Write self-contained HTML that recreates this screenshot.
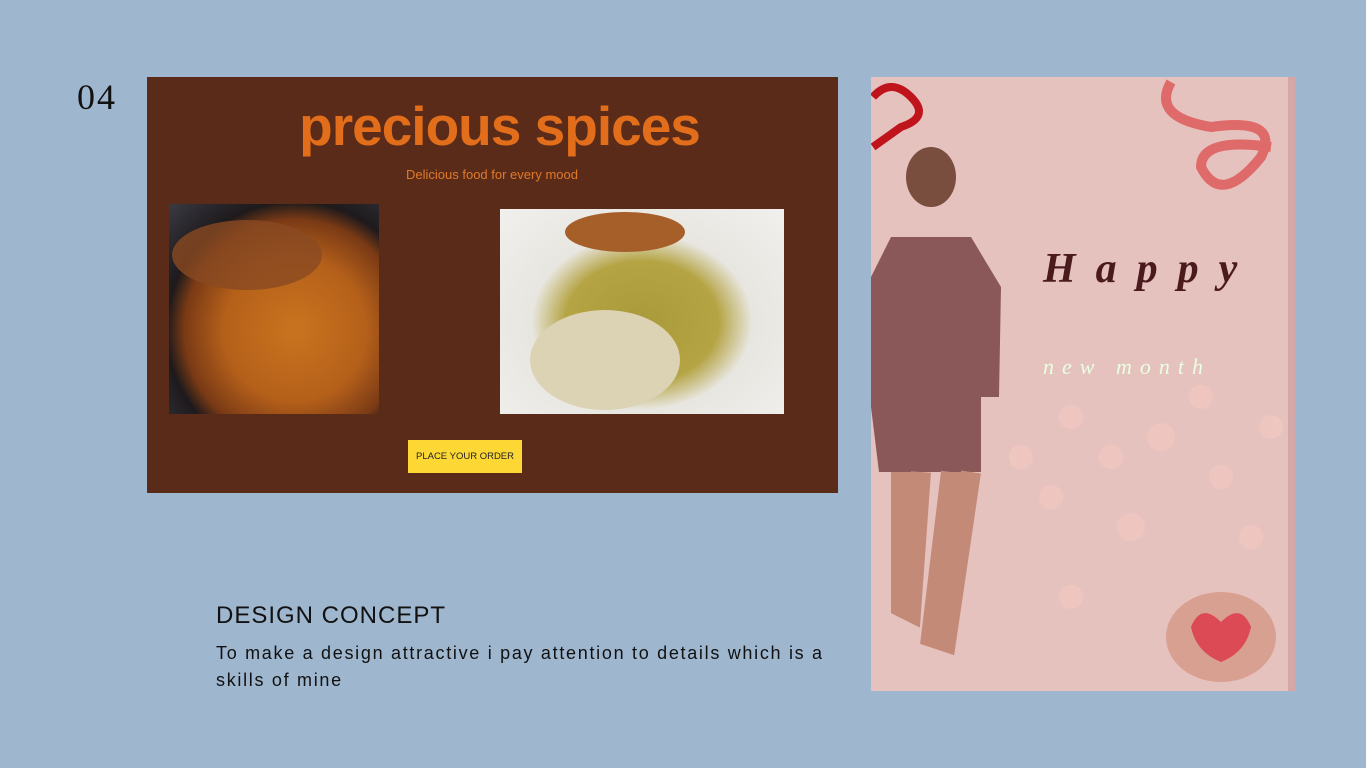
<!DOCTYPE html>
<html><head><meta charset="utf-8"><style>
*{margin:0;padding:0;box-sizing:border-box}
body{width:1366px;height:768px;background:#9fb6cf;position:relative;overflow:hidden;font-family:"Liberation Sans",sans-serif}
.a{position:absolute}
</style></head><body>
<div class="a" style="left:77px;top:76px;font-family:'Liberation Serif',serif;font-size:36px;color:#111;letter-spacing:2px">04</div>
<div class="a" style="left:147px;top:77px;width:691px;height:416px;background:#5a2b19"></div>
<div class="a" style="left:147px;top:94px;width:705px;text-align:center;font-weight:bold;font-size:55px;color:#e26e1b;letter-spacing:-1px">precious spices</div>
<div class="a" style="left:147px;top:167px;width:690px;text-align:center;font-size:13px;color:#e07a2a">Delicious food for every mood</div>
<div class="a" style="left:169px;top:204px;width:210px;height:210px;background:radial-gradient(ellipse at 60% 60%,#c8741e 0%,#b5601a 40%,#7a3a15 62%,#1e1a1c 72%,#3a3a44 100%)"></div>
<div class="a" style="left:172px;top:220px;width:150px;height:70px;border-radius:50%;background:#8a4a22;opacity:.8"></div>
<div class="a" style="left:500px;top:209px;width:284px;height:205px;background:radial-gradient(ellipse at 50% 55%,#a99a3a 0%,#b5a444 38%,#e8e6e0 55%,#f1f0ee 100%)"></div>
<div class="a" style="left:565px;top:212px;width:120px;height:40px;border-radius:50%;background:#a75f2a"></div>
<div class="a" style="left:530px;top:310px;width:150px;height:100px;border-radius:50%;background:#dcd2b4"></div>
<div class="a" style="left:408px;top:440px;width:114px;height:33px;background:#fdd835;color:#222;font-size:9.5px;line-height:33px;text-align:center">PLACE YOUR ORDER</div>
<div class="a" style="left:216px;top:602px;font-size:24px;color:#111;letter-spacing:1px">DESIGN CONCEPT</div>
<div class="a" style="left:216px;top:640px;width:630px;font-size:18px;line-height:27px;color:#111;letter-spacing:1.7px">To make a design attractive i pay attention to details which is a skills of mine</div>
<div class="a" style="left:871px;top:77px;width:424px;height:614px;background:#e6c2bf"></div>
<div class="a" style="left:1288px;top:77px;width:7px;height:614px;background:#d4a8a8"></div>
<svg class="a" style="left:871px;top:77px" width="424" height="614">
<path d="M2 20 Q20 0 40 20 Q60 40 30 50 L2 70" fill="none" stroke="#c0141c" stroke-width="8"/>
<path d="M300 5 Q280 40 340 50 Q410 40 390 80 Q350 130 330 90 Q330 60 400 70" fill="none" stroke="#df6a6a" stroke-width="10"/>
<ellipse cx="60" cy="100" rx="25" ry="30" fill="#7a4e3e"/>
<path d="M20 160 L100 160 L130 210 L128 320 L110 320 L110 395 L8 395 L0 330 L0 200 Z" fill="#8a5858"/>
<path d="M30 395 L30 530 L40 535 L50 395 M80 395 L60 560 L75 565 L100 395" fill="#c48a78" stroke="#c48a78" stroke-width="20"/>
<g fill="#f0c8c0" opacity=".8">
<circle cx="200" cy="340" r="12"/><circle cx="240" cy="380" r="12"/><circle cx="290" cy="360" r="14"/><circle cx="330" cy="320" r="12"/><circle cx="180" cy="420" r="12"/><circle cx="260" cy="450" r="14"/><circle cx="350" cy="400" r="12"/><circle cx="400" cy="350" r="12"/><circle cx="380" cy="460" r="12"/><circle cx="200" cy="520" r="12"/><circle cx="150" cy="380" r="12"/>
</g>
<ellipse cx="350" cy="560" rx="55" ry="45" fill="#d8a090"/>
<path d="M350 545 Q330 525 320 550 Q325 575 350 585 Q375 575 380 550 Q370 525 350 545Z" fill="#dc4a55"/>
<text x="172" y="205" font-family="'Liberation Serif',serif" font-style="italic" font-weight="bold" font-size="42" fill="#4a1a1c" letter-spacing="20">Happy</text>
<text x="172" y="297" font-family="'Liberation Serif',serif" font-style="italic" font-size="22" fill="#e8ffe0" letter-spacing="8">new month</text>
</svg>
</body></html>
